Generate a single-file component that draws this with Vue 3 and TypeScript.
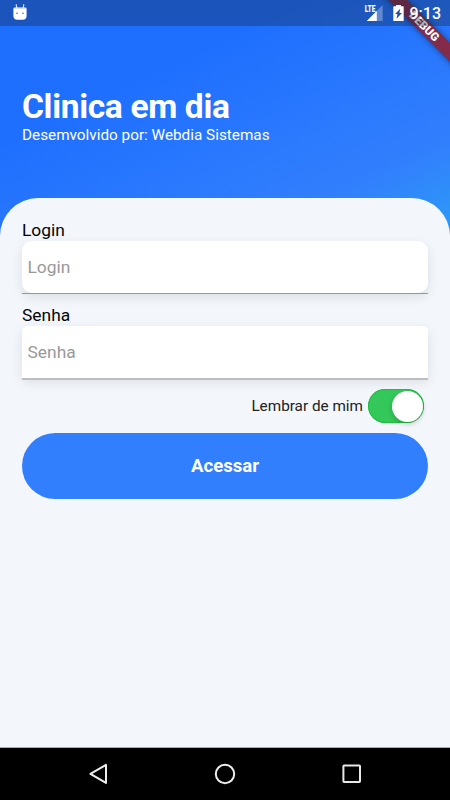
<script setup lang="ts">
import { ref } from 'vue'

const login = ref('')
const senha = ref('')
const lembrar = ref(true)
</script>

<template>
  <div class="screen">
    <div class="ribbon"><span>DEBUG</span></div>

    <div class="status">
      <svg class="robot" width="14" height="17" viewBox="0 0 14 17">
        <path d="M3.2 .6l.7 4M10.8 .6l-.7 4" stroke="#fff" stroke-width="1.1" stroke-linecap="round" opacity=".85" />
        <path d="M.4 5Q.4 3.6 2 3.6h10q1.6 0 1.6 1.4v6.8q0 3.9-4 3.9H4.4q-4 0-4-3.9z" fill="#fff" />
        <path d="M1.3 4.4h11.4" stroke="#bcd0f3" stroke-width=".7" />
        <circle cx="4" cy="9.2" r=".8" fill="#3166bd" />
        <circle cx="10" cy="9.2" r=".8" fill="#3166bd" />
      </svg>
      <div class="indicators">
        <div class="network">
          <span class="lte">LTE</span>
          <svg width="17" height="17" viewBox="0 0 17 17">
            <path d="M16.6 0v16H.8z" fill="#fff" opacity=".3" />
            <path d="M10.8 5.7V16H.8z" fill="#fff" />
          </svg>
        </div>
        <svg class="battery" width="11" height="17" viewBox="0 0 11 17">
          <path d="M3 0h5v1.2h2q.7 0 .7.7v13.6q0 .6-.6.6H.9q-.6 0-.6-.6V1.9q0-.7.7-.7H3z" fill="#fff" />
          <path d="M7.2 3.8L2.2 9h2.3l-1 4.7 5.4-5.8H6.4z" fill="#1d4c9f" />
        </svg>
        <span class="clock">9:13</span>
      </div>
    </div>

    <header class="header">
      <h1>Clinica em dia</h1>
      <p>Desemvolvido por: Webdia Sistemas</p>
    </header>

    <main class="panel">
      <label class="label" for="login">Login</label>
      <div class="field field-login">
        <input id="login" v-model="login" type="text" placeholder="Login" />
      </div>
      <label class="label label-senha" for="senha">Senha</label>
      <div class="field field-senha">
        <input id="senha" v-model="senha" type="password" placeholder="Senha" />
      </div>
      <div class="remember">
        <span>Lembrar de mim</span>
        <button class="toggle" :class="{ on: lembrar }" role="switch" :aria-checked="lembrar" @click="lembrar = !lembrar">
          <i class="knob"></i>
        </button>
      </div>
      <button class="submit">Acessar</button>
    </main>

    <nav class="navbar">
      <svg width="20" height="22" viewBox="0 0 20 22">
        <path d="M18 1.9v18L2.4 10.9z" fill="none" stroke="#eee" stroke-width="2" stroke-linejoin="round" />
      </svg>
      <svg width="22" height="22" viewBox="0 0 22 22">
        <circle cx="11" cy="11" r="9.2" fill="none" stroke="#eee" stroke-width="2" />
      </svg>
      <svg width="20" height="20" viewBox="0 0 20 20">
        <rect x="1.4" y="1.6" width="16.6" height="16.4" rx=".7" fill="none" stroke="#e8e8e8" stroke-width="2" />
      </svg>
    </nav>
  </div>
</template>

<style>
body {
  margin: 0;
  background: #000;
}
</style>

<style scoped>
.screen {
  position: relative;
  display: flex;
  flex-direction: column;
  width: 450px;
  height: 800px;
  overflow: hidden;
  font-family: Roboto, sans-serif;
  background: linear-gradient(155deg, #1f6fff 0, #1f6fff 130px, #327ffd 318px, #2d97f6 388px, #2d97f6 100%);
}
.ribbon {
  position: absolute;
  left: 364px;
  top: 20px;
  width: 120px;
  height: 13px;
  transform: rotate(45deg);
  background: #832b49;
  box-shadow: 0 0 6px rgba(0, 0, 0, 0.5);
  color: #fff;
  font-size: 11.6px;
  font-weight: 900;
  line-height: 13px;
  text-align: center;
}
.status {
  position: relative;
  box-sizing: border-box;
  display: flex;
  justify-content: space-between;
  flex: none;
  height: 26px;
  padding: 4px 9px 0 13px;
  background: rgba(20, 36, 60, 0.34);
  color: #fff;
}
.indicators {
  display: flex;
  align-items: flex-start;
}
.network {
  display: flex;
}
.network svg {
  margin: 1px 0 0 -7px;
}
.lte {
  font-size: 9.5px;
  font-weight: 900;
  line-height: 10px;
  transform: scaleX(0.7);
  transform-origin: right;
  margin-right: -3px;
}
.battery {
  margin: 1px 6px 0 10px;
}
.clock {
  font-size: 16px;
  font-weight: 500;
  line-height: 20px;
}
.header {
  box-sizing: border-box;
  flex: none;
  height: 172px;
  padding: 61px 22px 0;
  color: #fff;
}
h1 {
  margin: 0;
  font-size: 33.6px;
  font-weight: 700;
  letter-spacing: -0.36px;
  line-height: 39px;
}
p {
  margin: 0;
  font-size: 15.3px;
  line-height: 18px;
}
.panel {
  box-sizing: border-box;
  display: flex;
  flex: 1;
  flex-direction: column;
  padding: 22px 22px 0;
  border-radius: 38px 38px 0 0;
  background: #f3f7fc;
}
.label {
  color: #050505;
  font-size: 17.4px;
  line-height: 21px;
}
.label-senha {
  margin-top: 12px;
}
.field {
  box-sizing: border-box;
  height: 52px;
  background: #fff;
  box-shadow: 0 4px 12px rgba(0, 0, 0, 0.1);
}
.field-login {
  border-radius: 10px;
}
.field-login::after,
.field-senha::after {
  display: block;
  height: 1px;
  background: #989898;
  content: '';
}
.field-senha {
  border-radius: 5px 5px 0 0;
}
.field-senha::after {
  height: 2px;
  background: #bdbdbd;
}
.field input {
  display: block;
  box-sizing: border-box;
  width: 100%;
  height: 52px;
  padding: 0 5.5px;
  border: 0;
  outline: 0;
  background: transparent;
  color: #111;
  font: 17.4px Roboto, sans-serif;
}
.field input::placeholder {
  color: #999;
  opacity: 1;
}
.remember {
  display: flex;
  align-items: center;
  justify-content: flex-end;
  gap: 5px;
  height: 34px;
  margin: 11px 4px 0 0;
  color: #222;
  font-size: 15.3px;
}
.toggle {
  box-sizing: border-box;
  display: flex;
  width: 56px;
  height: 34px;
  padding: 1.5px;
  border: 0;
  border-radius: 17px;
  background: #c7c7cc;
}
.toggle.on {
  justify-content: flex-end;
  background: #34c759;
  box-shadow: inset 0 0 0 1px #22bd43;
}
.knob {
  width: 31px;
  height: 31px;
  border-radius: 50%;
  background: #fff;
  box-shadow: 0 2px 5px rgba(0, 0, 0, 0.2);
}
.submit {
  height: 66px;
  margin-top: 10px;
  padding: 0;
  border: 0;
  border-radius: 33px;
  background: #327ffd;
  color: #fff;
  font: 700 18.6px Roboto, sans-serif;
}
.navbar {
  box-sizing: border-box;
  display: flex;
  align-items: center;
  justify-content: space-between;
  flex: none;
  height: 53px;
  padding: 0 88px;
  border-top: 1px solid #a9acb0;
  background: #000;
}
</style>
